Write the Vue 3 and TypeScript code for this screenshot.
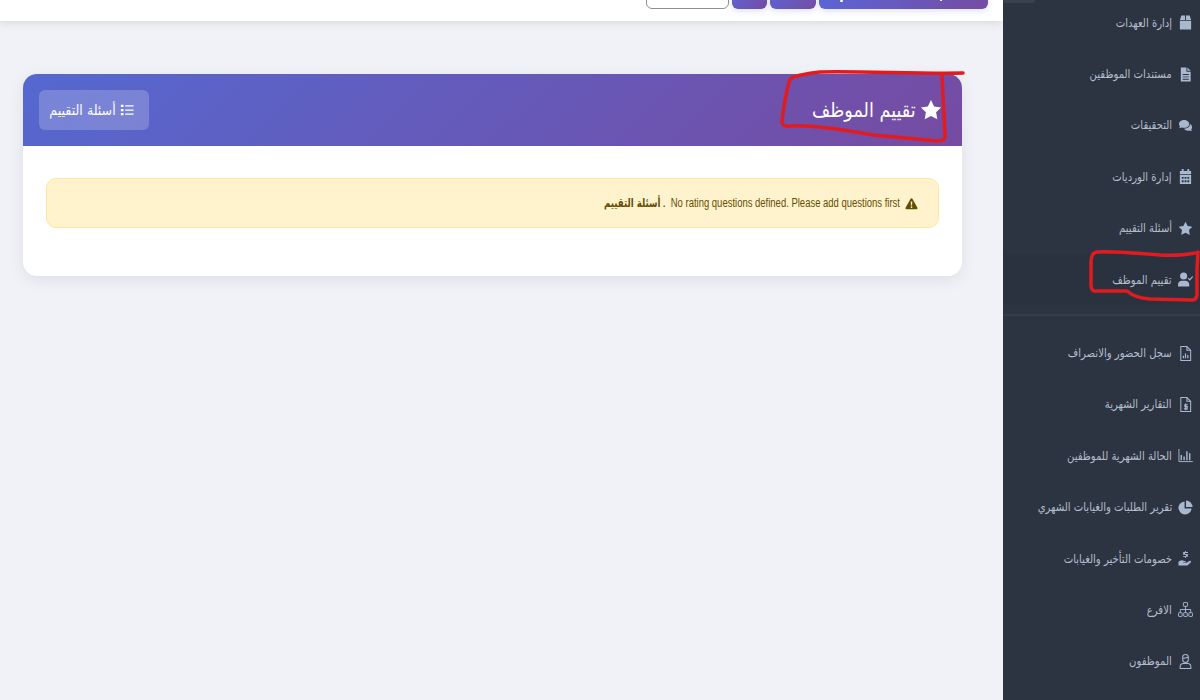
<script setup lang="ts">
interface NavItem {
  label: string;
  icon: string;
  active?: boolean;
}

const firstGroup: NavItem[] = [
  { label: 'إدارة العهدات', icon: 'box' },
  { label: 'مستندات الموظفين', icon: 'file' },
  { label: 'التحقيقات', icon: 'comments' },
  { label: 'إدارة الورديات', icon: 'calendar' },
  { label: 'أسئلة التقييم', icon: 'star' },
  { label: 'تقييم الموظف', icon: 'userCheck', active: true }
];

const secondGroup: NavItem[] = [
  { label: 'سجل الحضور والانصراف', icon: 'fileChart' },
  { label: 'التقارير الشهرية', icon: 'fileDollar' },
  { label: 'الحالة الشهرية للموظفين', icon: 'chartBar' },
  { label: 'تقرير الطلبات والغيابات الشهري', icon: 'pie' },
  { label: 'خصومات التأخير والغيابات', icon: 'hand' },
  { label: 'الافرع', icon: 'sitemap' },
  { label: 'الموظفون', icon: 'userTie' }
];
</script>

<template>
  <div class="page" dir="rtl">
    <aside class="sidebar">
      <div class="corner"></div>
      <ul class="nav nav-first">
        <li v-for="item in firstGroup" :key="item.label" class="nav-item" :class="{ active: item.active }">
          <span class="nav-icon">
            <svg viewBox="0 0 16 16">
              <path v-if="item.icon === 'box'" fill="currentColor" d="M3.500 0.500h4v4.700H2zM8.500 0.500h4l1.500 4.700H8.500zM2 6.200h12v9.300H2z" />
              <path v-else-if="item.icon === 'file'" fill="currentColor" fill-rule="evenodd" d="M3 0.500h6v4.500h4.500v10.500H3zM10 0.500l3.500 3.500h-3.500zM5 7.500v1h6.500v-1zM5 10v1h6.500v-1zM5 12.500v1h6.500v-1z" />
              <g v-else-if="item.icon === 'comments'" fill="currentColor">
                <path d="M6.500 2C3.500 2 1 3.900 1 6.300c0 1 .4 1.900 1.100 2.600L1.200 11l2.600-1c.8.3 1.700.5 2.700.5 3 0 5.500-1.900 5.500-4.200S9.500 2 6.500 2z" />
                <path d="M12.800 6.500c0 2.900-2.800 5-6 5l-.5 0c.8 1.200 2.400 2 4.200 2 .7 0 1.300-.1 1.900-.3l2.400 1-.7-2c.6-.6.900-1.400.9-2.200 0-1.500-.9-2.800-2.200-3.500z" />
              </g>
              <path v-else-if="item.icon === 'calendar'" fill="currentColor" fill-rule="evenodd" d="M4 0h2v2h4V0h2v2h2v3.500H2V2h2zM2 6.500h12V16H2zM4 8.500v2h2v-2zM7 8.500v2h2v-2zM10 8.500v2h2v-2zM4 12v2h2v-2zM7 12v2h2v-2zM10 12v2h2v-2z" />
              <path v-else-if="item.icon === 'star'" fill="currentColor" d="M8 .8l2.300 4.600 5 .7-3.600 3.600.9 5.100L8 12.400l-4.600 2.400.9-5.100L.7 6.100l5-.7z" />
              <g v-else fill="currentColor">
                <circle cx="6" cy="4.300" r="3.800" />
                <path d="M0 15.500V13.500C0 10.800 2 9.300 4 9.300h4c2 0 4 1.500 4 4.200v2z" />
                <path d="M10.800 6.500l1.800 2 3-3.700" fill="none" stroke="currentColor" stroke-width="1.200" />
              </g>
            </svg>
          </span>
          <span class="nav-label">{{ item.label }}</span>
        </li>
      </ul>
      <div class="nav-divider"></div>
      <ul class="nav">
        <li v-for="item in secondGroup" :key="item.label" class="nav-item">
          <span class="nav-icon">
            <svg viewBox="0 0 16 16">
              <g v-if="item.icon === 'fileChart'" fill="none" stroke="currentColor" stroke-width="1.100">
                <path d="M3 .6h6.500L13.500 4.500V15.400H3zM9.500 .6v4h4" />
                <path d="M5.800 13V10.500M8 13V8M10.500 13V9.500" stroke-width="1.300" />
              </g>
              <g v-else-if="item.icon === 'fileDollar'" fill="none" stroke="currentColor" stroke-width="1.100">
                <path d="M3 .6h6.500L13.500 4.500V15.400H3zM9.500 .6v4h4" />
                <path d="M10.300 8.300H7.300v2h2.500v2.300H6.300M8.300 7v7" stroke-width="1.200" />
              </g>
              <g v-else-if="item.icon === 'chartBar'" fill="none" stroke="currentColor" stroke-width="1">
                <path d="M1 1v13.500h14.800" />
                <path d="M3.500 13V7.500M6.500 13V9M9.500 13V3.500M12.500 13V5.500" stroke-width="1.500" />
              </g>
              <g v-else-if="item.icon === 'pie'" fill="currentColor">
                <path d="M7 1.500A7 7 0 1 0 14.500 9H7z" />
                <path d="M8.500 0.500a7 7 0 0 1 7 7h-7z" />
              </g>
              <g v-else-if="item.icon === 'hand'" fill="currentColor">
                <path d="M.5 11.500c1.500-1.500 3-2 4.500-1.500l2.800.8c1 .3 1 1.500 0 1.500H5.500v.5h3l3.800-2.200c1.200-.6 2.300.5 1.200 1.700L10 15.500H.5z" />
                <path d="M7.500 0h1v1h2v1h-3v1.200h3v3h-2v1.300h-1V6.200h-2v-1h3V4h-3V1h2z" />
              </g>
              <g v-else-if="item.icon === 'sitemap'" fill="none" stroke="currentColor" stroke-width="1">
                <rect x="5.800" y=".6" width="4.400" height="4" rx=".5" />
                <rect x=".6" y="11.400" width="3.800" height="4" rx=".5" />
                <rect x="6.100" y="11.400" width="3.800" height="4" rx=".5" />
                <rect x="11.600" y="11.400" width="3.800" height="4" rx=".5" />
                <path d="M8 4.600v6.800M2.500 11.400V8h11v3.400" />
              </g>
              <g v-else fill="none" stroke="currentColor" stroke-width="1.100">
                <path d="M5 3.200C5 1.500 6.300.6 8 .6s3 .9 3 2.600v2.600c0 1.900-1.300 3.200-3 3.200S5 7.700 5 5.800zM5 4.600c2 0 4.500-.4 6-1.400" />
                <path d="M2.300 15.400v-1.800c0-2 1.500-3.400 3.500-3.400h4.400c2 0 3.500 1.400 3.500 3.400v1.800z" />
              </g>
            </svg>
          </span>
          <span class="nav-label">{{ item.label }}</span>
        </li>
      </ul>
    </aside>

    <main class="main">
      <header class="topbar">
        <button class="top-btn wide"></button>
        <button class="top-btn mid"></button>
        <button class="top-btn small"></button>
        <button class="top-btn outline"></button>
      </header>

      <section class="content">
        <div class="card">
          <div class="card-head">
            <h1 class="card-title">
              <svg class="title-star" viewBox="0 0 16 16">
                <path fill="currentColor" d="M8 .8l2.300 4.600 5 .7-3.600 3.600.9 5.100L8 12.400l-4.600 2.400.9-5.100L.7 6.100l5-.7z" />
              </svg>
              <span class="title-text">تقييم الموظف</span>
            </h1>
            <a class="head-btn">
              <svg viewBox="0 0 16 16" class="list-icon">
                <path fill="currentColor" d="M1 2h3v2.500H1zM6 2.500h9.500V4H6zM1 6.800h3v2.500H1zM6 7.300h9.500v1.500H6zM1 11.500h3V14H1zM6 12h9.500v1.500H6z" />
              </svg>
              <span class="head-btn-text">أسئلة التقييم</span>
            </a>
          </div>
          <div class="card-body">
            <div class="alert">
              <svg viewBox="0 0 16 16" class="alert-icon">
                <path fill="currentColor" fill-rule="evenodd" d="M8 1.500c.5 0 .9.300 1.100.7l6.200 11c.4.800-.1 1.800-1.100 1.800H1.800c-1 0-1.500-1-1.100-1.800l6.200-11c.2-.4.600-.7 1.100-.7zM7 5.500l.3 5h1.400l.3-5zM8 11.300a1.100 1.100 0 1 0 0 2.200 1.100 1.100 0 0 0 0-2.200z" />
              </svg>
              <span class="alert-latin">No rating questions defined. Please add questions first</span>
              <span class="alert-dot">.</span>
              <strong class="alert-strong">أسئلة التقييم</strong>
            </div>
          </div>
        </div>
      </section>
    </main>

    <svg class="marker" viewBox="0 0 1200 700">
      <path d="M963 73C920 74 860 71 820 72Q795 75 790 79Q784 100 782 122Q783 127 790 126C810 125 845 130 873 135L938 141Q945 141 945 136L942 76" />
      <path d="M1195 253Q1180 256 1160 255C1135 253 1110 251 1097 252Q1091 253 1091 262L1091 285Q1091 292 1097 291L1127 291Q1135 298 1150 299L1192 300Q1197 300 1197 294L1197 270 1198 252" />
    </svg>
  </div>
</template>

<style scoped>
.page {
  position: relative;
  display: flex;
  width: 1200px;
  height: 700px;
  overflow: hidden;
  background: #f0f2f8;
  font-family: "DejaVu Sans", "Noto Sans", sans-serif;
}

.sidebar {
  width: 197px;
  flex-shrink: 0;
  height: 700px;
  background: #2c3441;
  position: relative;
}

.corner {
  position: absolute;
  top: 0;
  left: 0;
  width: 32px;
  height: 3px;
  background: #3a4250;
  border-radius: 0 0 4px 4px;
}

.nav {
  list-style: none;
  margin: 0;
  padding: 0;
}

.nav-first {
  margin-top: -3px;
}

.nav-item {
  display: flex;
  align-items: center;
  height: 51.4px;
  padding-right: 7px;
  color: #b4bdcc;
}

.nav-item.active {
  background: #2b323f;
}

.nav-icon {
  width: 15px;
  height: 15px;
  margin-left: 6px;
  color: #a9b7cf;
  flex-shrink: 0;
}

.nav-icon svg {
  display: block;
  width: 15px;
  height: 15px;
}

.nav-label {
  font-size: 12px;
  white-space: nowrap;
  transform: scaleX(0.84);
  transform-origin: right center;
}

.nav-divider {
  height: 2px;
  margin: 9px 0 11px;
  background: #353c4a;
}

.main {
  flex: 1;
  min-width: 0;
}

.topbar {
  display: flex;
  align-items: flex-end;
  gap: 3px;
  height: 21px;
  padding: 0 15px 12px 0;
  box-sizing: border-box;
  background: #fff;
  box-shadow: 0 2px 10px rgba(0, 0, 0, 0.1);
}

.top-btn {
  height: 20px;
  padding: 0;
  border: none;
  border-radius: 6px;
  background: linear-gradient(135deg, #5a67d8, #764ba2);
  box-shadow: 0 2px 6px rgba(90, 103, 216, 0.2);
}

.top-btn.wide {
  position: relative;
  width: 169px;
}

/* bits of the label and icon that reach below the page's top edge */
.top-btn.wide::before,
.top-btn.wide::after {
  content: "";
  position: absolute;
  background: #fff;
  border-radius: 1px;
}

.top-btn.wide::before {
  left: 21px;
  bottom: 7px;
  width: 3px;
  height: 2px;
}

.top-btn.wide::after {
  left: 121px;
  bottom: 8px;
  width: 2px;
  height: 1px;
}

.top-btn.mid { width: 46px; }
.top-btn.small { width: 35px; }

.top-btn.outline {
  width: 83px;
  background: #fff;
  border: 1px solid #8f8f8f;
  box-shadow: none;
}

.content {
  padding: 53px 41px 0 23px;
}

.card {
  background: #fff;
  border-radius: 14px;
  overflow: hidden;
  box-shadow: 0 4px 16px rgba(0, 0, 0, 0.08);
}

.card-head {
  display: flex;
  align-items: center;
  justify-content: space-between;
  height: 72px;
  padding: 0 20px 0 16px;
  background: linear-gradient(135deg, #5568d0, #764ba2);
  color: #fff;
}

.card-title {
  display: flex;
  align-items: center;
  gap: 4px;
  margin: 0;
  font-size: 20px;
  font-weight: 400;
}

.title-star {
  width: 22px;
  height: 22px;
}

.title-text {
  white-space: nowrap;
  transform: scaleX(0.88);
  transform-origin: right center;
}

.head-btn {
  display: flex;
  align-items: center;
  gap: 4px;
  width: 110px;
  height: 40px;
  padding-right: 15px;
  box-sizing: border-box;
  background: rgba(255, 255, 255, 0.2);
  border-radius: 6px;
}

.list-icon {
  width: 14px;
  height: 14px;
  flex-shrink: 0;
}

.head-btn-text {
  font-size: 14px;
  white-space: nowrap;
  transform: scaleX(0.9);
  transform-origin: right center;
}

.card-body {
  padding: 32px 23px 48px;
}

.alert {
  display: flex;
  align-items: center;
  height: 50px;
  padding-right: 20px;
  box-sizing: border-box;
  font-size: 12px;
  color: #664d03;
  background: #fff3cd;
  border: 1px solid #ffe69c;
  border-radius: 10px;
}

.alert-icon {
  width: 13px;
  height: 13px;
  margin-left: 5px;
  flex-shrink: 0;
}

.alert-latin {
  width: 233px;
  flex-shrink: 0;
  font-family: "Liberation Sans", sans-serif;
  white-space: nowrap;
  transform: scaleX(0.79);
  transform-origin: right center;
}

.alert-dot {
  margin: 0 1px 0 2px;
}

.alert-strong {
  white-space: nowrap;
  transform: scaleX(0.72);
  transform-origin: right center;
}

.marker {
  position: absolute;
  top: 0;
  left: 0;
  width: 1200px;
  height: 700px;
  pointer-events: none;
}

.marker path {
  fill: none;
  stroke: #e21b1f;
  stroke-width: 3.5;
  stroke-linecap: round;
  stroke-linejoin: round;
}
</style>

<style>
html, body {
  margin: 0;
  overflow: hidden;
}
</style>
